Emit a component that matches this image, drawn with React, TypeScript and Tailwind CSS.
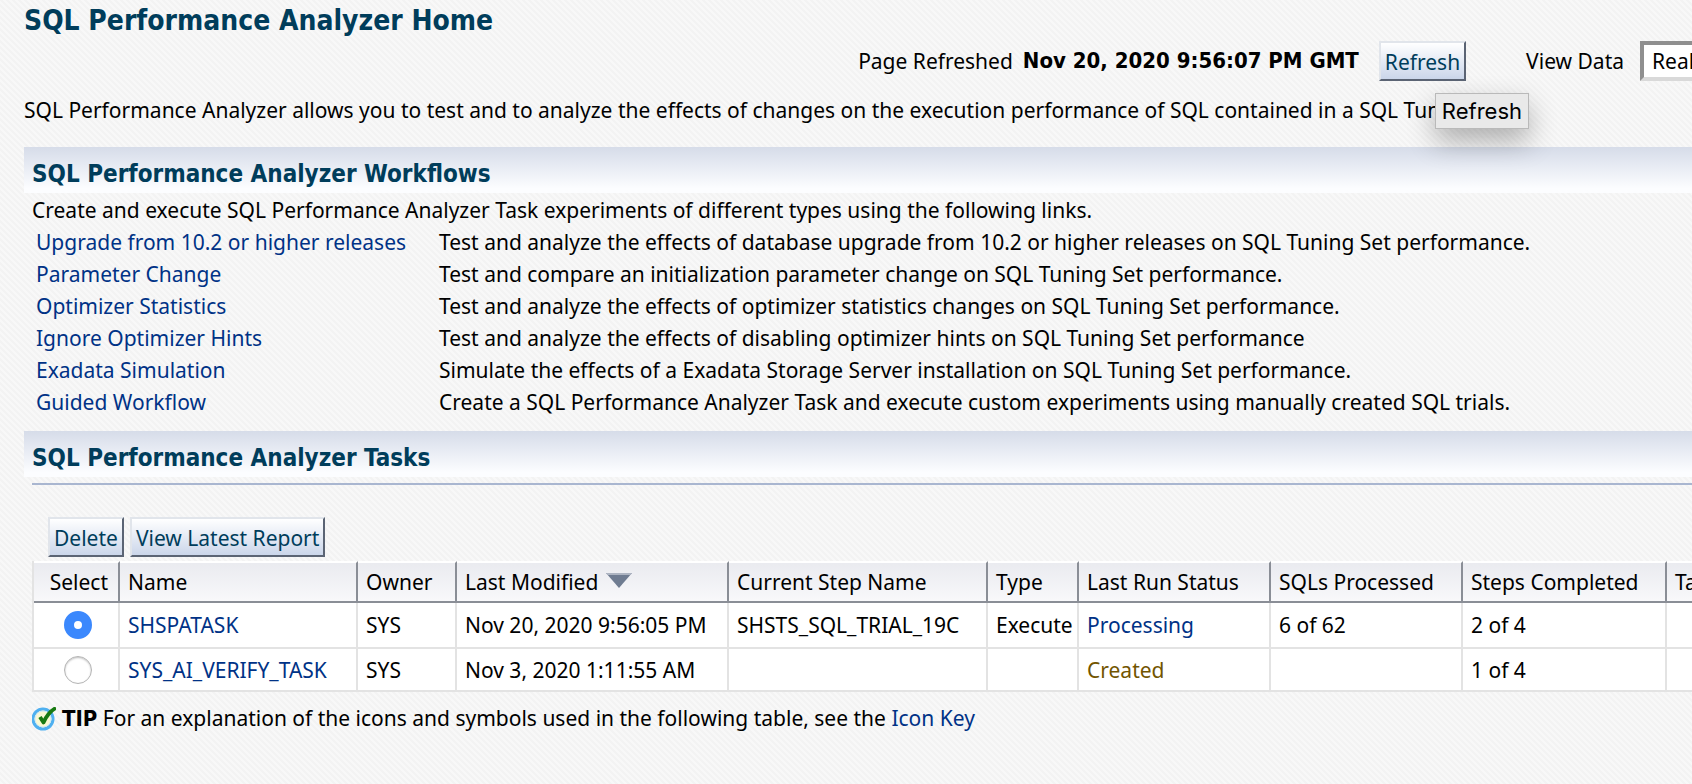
import { useState, type ReactNode } from 'react';

const link = 'text-[#003286] hover:underline';

const boldFont = "font-['DejaVu_Sans_Condensed','DejaVu_Sans',sans-serif] font-bold [font-stretch:condensed]";

const button =
  'h-10 cursor-pointer border-2 border-t-[#e1e5eb] border-l-[#e1e5eb] border-r-[#5b6474] border-b-[#5b6474] bg-linear-to-b from-white to-[#cbd6ea] px-1 pt-px leading-9 text-[#003d5b]';

const workflows = [
  ['Upgrade from 10.2 or higher releases', 'Test and analyze the effects of database upgrade from 10.2 or higher releases on SQL Tuning Set performance.'],
  ['Parameter Change', 'Test and compare an initialization parameter change on SQL Tuning Set performance.'],
  ['Optimizer Statistics', 'Test and analyze the effects of optimizer statistics changes on SQL Tuning Set performance.'],
  ['Ignore Optimizer Hints', 'Test and analyze the effects of disabling optimizer hints on SQL Tuning Set performance'],
  ['Exadata Simulation', 'Simulate the effects of a Exadata Storage Server installation on SQL Tuning Set performance.'],
  ['Guided Workflow', 'Create a SQL Performance Analyzer Task and execute custom experiments using manually created SQL trials.'],
];

const tasks = [
  { name: 'SHSPATASK', owner: 'SYS', modified: 'Nov 20, 2020 9:56:05 PM', step: 'SHSTS_SQL_TRIAL_19C', type: 'Execute', status: 'Processing', sqls: '6 of 62', steps: '2 of 4' },
  { name: 'SYS_AI_VERIFY_TASK', owner: 'SYS', modified: 'Nov 3, 2020 1:11:55 AM', step: '', type: '', status: 'Created', sqls: '', steps: '1 of 4' },
];

function SectionHeading({ children }: { children: ReactNode }) {
  return (
    <h2 className={`h-[46px] bg-linear-to-b from-[#d6dce9] to-[#fcfdff] to-90% pt-1 pl-2 text-2xl leading-[46px] text-[#003d5b] ${boldFont}`}>
      {children}
    </h2>
  );
}

function Head({ children }: { children: ReactNode }) {
  return (
    <th scope="col" className="h-10 border-r-2 border-r-[#8a8e96] border-b-2 border-b-[#8a8e96] pl-2 text-left font-normal">
      {children}
    </th>
  );
}

function Cell({ children }: { children?: ReactNode }) {
  return <td className="border-r-2 border-b-2 border-[#e3e3e3] pl-2">{children}</td>;
}

function TipIcon() {
  return (
    <svg className="size-6" viewBox="0 0 24 24" fill="none" aria-hidden="true">
      <circle cx="11" cy="12" r="10" fill="#fbf9d2" stroke="#4fb0f0" strokeWidth="3" />
      <circle cx="11" cy="12" r="8" stroke="#cfe9f5" strokeWidth="1" />
      <path d="M8 10 11.5 15.5 C13.5 10.5 18.5 3.5 24 1" stroke="#187a12" strokeWidth="3.8" strokeLinejoin="round" />
    </svg>
  );
}

export default function App() {
  const [selected, setSelected] = useState(0);
  return (
    <main className="min-h-screen overflow-hidden bg-[linear-gradient(45deg,#f3f3f3_25%,#f8f8f8_25%_50%,#f3f3f3_50%_75%,#f8f8f8_75%)] bg-[length:6px_6px] pl-6 font-['Noto_Sans',sans-serif] text-[21px] leading-8 whitespace-nowrap text-black">
      <h1 className={`h-[41px] text-[28px] leading-[42px] text-[#003d5b] ${boldFont}`}>SQL Performance Analyzer Home</h1>

      <div className="flex h-10 items-center justify-end">
        <span className="mr-2.5">Page Refreshed</span>
        <strong className={`mr-5 text-[22px] ${boldFont}`}>Nov 20, 2020 9:56:07 PM GMT</strong>
        <div className="relative mr-[60px]">
          <button type="button" className={button}>Refresh</button>
          <div role="tooltip" className="absolute top-[52px] left-[56px] z-10 h-9 border border-[#b9b9b9] bg-[#e9e9e9] px-1.5 font-[Inter,sans-serif] text-[22px] leading-[34px] shadow-[0_12px_28px_rgba(0,0,0,0.3)]">
            Refresh
          </div>
        </div>
        <label htmlFor="view-data" className="mr-4">View Data</label>
        <select id="view-data" className="h-10 w-[52px] appearance-none border-4 border-r-0 border-t-[#8f8f8f] border-b-[#d9d9d9] border-l-[#8f8f8f] bg-white pl-2">
          <option>Real Time: Manual Refresh</option>
        </select>
      </div>

      <p className="pt-[13px] pb-[21px]">
        SQL Performance Analyzer allows you to test and to analyze the effects of changes on the execution performance of SQL contained in a SQL Tuning Set.
      </p>

      <section>
        <SectionHeading>SQL Performance Analyzer Workflows</SectionHeading>
        <p className="pt-px pl-2">Create and execute SQL Performance Analyzer Task experiments of different types using the following links.</p>
        <dl className="grid grid-cols-[403px_1fr] pb-[13px] pl-3">
          {workflows.map(([name, description]) => (
            <div key={name} className="contents">
              <dt><a href="#" className={link}>{name}</a></dt>
              <dd>{description}</dd>
            </div>
          ))}
        </dl>
      </section>

      <section>
        <SectionHeading>SQL Performance Analyzer Tasks</SectionHeading>
        <div className="pl-2">
          <hr className="mt-1.5 border-t-2 border-[#a9b6d0]" />
          <div className="flex gap-1.5 pt-8 pb-1 pl-4">
            <button type="button" className={button}>Delete</button>
            <button type="button" className={button}>View Latest Report</button>
          </div>
          <table className="w-[1794px] table-fixed border-separate border-spacing-0 border-l-2 border-[#e3e3e3]">
            <colgroup>
              <col className="w-[86px]" />
              <col className="w-[238px]" />
              <col className="w-[99px]" />
              <col className="w-[272px]" />
              <col className="w-[259px]" />
              <col className="w-[91px]" />
              <col className="w-[192px]" />
              <col className="w-[192px]" />
              <col className="w-[204px]" />
              <col />
            </colgroup>
            <thead>
              <tr className="h-[42px] bg-linear-to-b from-[#e9eaef] to-[#f9f9fb] [&>th]:border-t-2 [&>th]:border-t-white">
                <th scope="col" className="border-r-2 border-r-[#8a8e96] border-b-2 border-b-[#8a8e96] pr-2.5 text-right font-normal">Select</th>
                <Head>Name</Head>
                <Head>Owner</Head>
                <Head>
                  Last Modified
                  <svg className="ml-2 inline-block h-[15px] w-[26px] align-[2px]" viewBox="0 0 26 15" aria-hidden="true">
                    <path d="M0 0H26L13 15Z" fill="#6f7c91" />
                    <path d="M0 0H26L24.5 2H1.5Z" fill="#aeb5c2" />
                  </svg>
                </Head>
                <Head>Current Step Name</Head>
                <Head>Type</Head>
                <Head>Last Run Status</Head>
                <Head>SQLs Processed</Head>
                <Head>Steps Completed</Head>
                <Head>Task Description</Head>
              </tr>
            </thead>
            <tbody>
              {tasks.map((task, index) => (
                <tr key={task.name} className="h-[46px] bg-white last:h-[43px]">
                  <td className="border-r-2 border-b-2 border-[#e3e3e3] pl-1 text-center">
                    <input
                      type="radio"
                      name="task"
                      aria-label={task.name}
                      checked={selected === index}
                      onChange={() => setSelected(index)}
                      className="mx-auto block size-7 appearance-none rounded-full border border-[#b5b5b5] bg-white shadow-[inset_0_1px_2px_rgba(0,0,0,0.25)] checked:border-10 checked:border-[#3b88fd] checked:shadow-none"
                    />
                  </td>
                  <Cell><a href="#" className={link}>{task.name}</a></Cell>
                  <Cell>{task.owner}</Cell>
                  <Cell>{task.modified}</Cell>
                  <Cell>{task.step}</Cell>
                  <Cell>{task.type}</Cell>
                  <Cell>
                    <a href="#" className={task.status === 'Created' ? 'text-[#725500]' : 'text-[#003286]'}>{task.status}</a>
                  </Cell>
                  <Cell>{task.sqls}</Cell>
                  <Cell>{task.steps}</Cell>
                  <Cell />
                </tr>
              ))}
            </tbody>
          </table>
          <p className="flex items-center gap-1.5 pt-2.5">
            <TipIcon />
            <span>
              <strong className={`text-[22px] ${boldFont}`}>TIP</strong> For an explanation of the icons and symbols used in the following table, see the <a href="#" className={link}>Icon Key</a>
            </span>
          </p>
        </div>
      </section>
    </main>
  );
}
